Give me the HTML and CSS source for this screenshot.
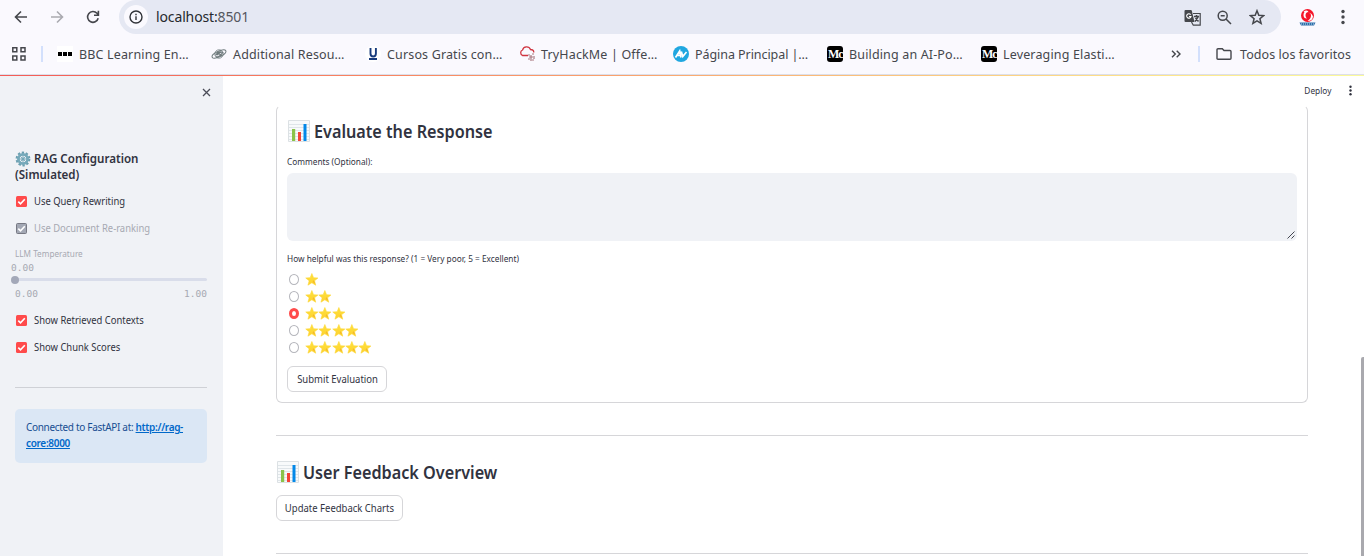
FILE: index.html
```
<!DOCTYPE html>
<html lang="es">
<head>
<meta charset="utf-8">
<title>localhost:8501</title>
<link rel="stylesheet" href="styles.css">
</head>
<body>
<svg class="defs" width="0" height="0" aria-hidden="true">
  <defs>
    <linearGradient id="gold" x1="0" y1="0" x2="0" y2="1"><stop offset="0" stop-color="#ffe23d"/><stop offset="1" stop-color="#fdd02f"/></linearGradient>
    <symbol id="star" viewBox="0 0 13 13"><path d="M6.700.5 8.400 4.700l4.400.3-3.400 2.800 1.200 4.400-3.900-2.400-3.900 2.400L4 7.800.6 5l4.400-.3z" fill="url(#gold)" stroke="#fdd835" stroke-width=".6" stroke-linejoin="round"/><path d="m8.500 7 1.500 3.800L7.500 9z" fill="#f4b82a"/></symbol>
    <symbol id="chart" viewBox="0 0 22 22"><path d="M.5.5h21v21H.5z" fill="#f8fafb" stroke="#dce1e4"/><path d="M1 4.500h20M1 7.500h20M1 10.500h20M1 13.500h20M1 16.500h20M1 19.500h20" stroke="#d8dfe4" stroke-width=".8"/><path d="M4 9h3.200v12H4z" fill="#8bc34a"/><path d="M10 12h3v9h-3z" fill="#f44336"/><path d="M15.500 4h3v17h-3z" fill="#0288e8"/></symbol>
    <symbol id="check" viewBox="0 0 11 11"><path d="m2.300 5.600 2.200 2.200 4.300-4.600" fill="none" stroke="#fff" stroke-width="1.600"/></symbol>
  </defs>
</svg>

<header class="browser">
  <div class="toolbar">
    <svg class="nav back" viewBox="0 0 14 14"><path d="M13 7H2M7 1.500 1.500 7 7 12.500" /></svg>
    <svg class="nav forward" viewBox="0 0 14 14"><path d="M1 7h11M7 1.500 12.500 7 7 12.500"/></svg>
    <svg class="nav reload" viewBox="0 0 14 14"><path d="M12.200 8.300A5.400 5.400 0 1 1 11 3.300l1.200 1.300M12.400.8v4.400H8"/></svg>
    <div class="omnibox">
      <span class="info"><svg viewBox="0 0 14 14" width="14" height="14"><circle cx="7" cy="7" r="6"/><path d="M7 6.300v3.800M7 3.700v1.500"/></svg></span>
      <span class="url">localhost:<span class="port">8501</span></span>
      <svg class="tool translate" viewBox="0 0 17 17"><path d="M9 4.500h7.200v11.700H9.300L7.500 13" fill="none" stroke="#45474c" stroke-width="1.200"/><path d="M1.500 1H7q.6 0 .8.700L10.500 13h-9Q.5 13 .5 12V2q0-1 1-1Z" fill="#45474c"/><path d="M6.600 5.600A2.200 2.200 0 1 0 7 7.500H5" fill="none" stroke="#fff" stroke-width="1.100"/><path d="M10 7.500h5M12.500 6v1.500M14 8l-3 4.500M11.500 9l3 3.500" fill="none" stroke="#45474c"/></svg>
      <svg class="tool zoomout" viewBox="0 0 15 15"><circle cx="5.700" cy="5.700" r="4.500"/><path d="m9 9 5 5M3.700 5.700h4"/></svg>
      <svg class="tool bookmark" viewBox="0 0 16 16"><path d="m8 1.700 1.800 4.500 4.800.4-3.700 3.100 1.200 4.700L8 11.900l-4.100 2.500 1.200-4.700-3.700-3.100 4.800-.4z"/></svg>
    </div>
    <svg class="profile" viewBox="0 0 17 17"><circle cx="8.500" cy="6.500" r="6.500" fill="#f5162a"/><path d="M4.500 2.500Q8 .5 9.500 3q-3 0-3 3.500 0 2 1.500 3-3.500 0-3.500-3.500Q4.500 4 5.500 3ZM9 3.500q3 .5 3 3 0 3-3.500 5.500 5 0 5.500-4.500Q13 4 9 3.500Z" fill="#fff"/><path d="M.5 13.500h16l-1.500 3H2z" fill="#2c6eaa"/><path d="M2 15h13" stroke="#c5deee" stroke-dasharray="1 1"/></svg>
    <svg class="dots" viewBox="0 0 4 16"><circle cx="2" cy="2.500" r="1.700"/><circle cx="2" cy="8" r="1.700"/><circle cx="2" cy="13.500" r="1.700"/></svg>
  </div>
  <nav class="bookmarks">
    <svg class="apps" viewBox="0 0 14 14"><path d="M.8.8h4v4h-4zM9 .8h4v4H9zM.8 9h4v4h-4zM9 9h4v4H9z"/></svg>
    <i class="sep"></i>
    <a class="bm"><svg viewBox="0 0 16 16"><path d="M0 0h16v16H0z" fill="#fff"/><path d="M1 6h4v4H1zM6 6h4v4H6zM11 6h4v4h-4z"/></svg><span>BBC Learning En…</span></a>
    <a class="bm"><svg viewBox="0 0 16 16" fill="none" stroke="#6f7b7d"><ellipse cx="8" cy="8" rx="7.500" ry="2.800" transform="rotate(-25 8 8)"/><circle cx="8" cy="8" r="4.200" stroke-width=".8"/><path d="M4.500 9.500q3-5 7-3M5 11q4 0 7-5M6 6l5 4M6 9l4-3" stroke-width="1.300"/></svg><span>Additional Resou…</span></a>
    <a class="bm"><svg viewBox="0 0 16 16"><circle cx="8" cy="8" r="8" fill="#fff"/><path d="M5.500 2v5.500q0 3 2.700 3t2.700-3V2M4 13h8" fill="none" stroke="#173b7c" stroke-width="1.900"/></svg><span>Cursos Gratis con…</span></a>
    <a class="bm"><svg viewBox="0 0 16 16" fill="none"><path d="M9 9.500H3.500a3 3 0 0 1 0-5.500 4.200 4.200 0 0 1 8-.5q3.300 0 3.300 3" stroke="#cf3540" stroke-width="1.300"/><path d="M9 9h2M13 8h2M10 11h4M9 13h2M13 14h2M12 9v6M15 10v3" stroke="#a97980" stroke-width="1.200"/></svg><span>TryHackMe | Offe…</span></a>
    <a class="bm"><svg viewBox="0 0 16 16"><circle cx="8" cy="8" r="8" fill="#20a7e0"/><path d="M2.500 11.500 6.700 5l1.300 6.500M4.500 9.300h3M8.300 5.500l1.500 5L13.500 6" fill="none" stroke="#fff" stroke-width="1.700"/></svg><span class="pp">Página Principal |…</span></a>
    <a class="bm"><span class="medium">Mc</span><span>Building an AI-Po…</span></a>
    <a class="bm"><span class="medium">Mc</span><span>Leveraging Elasti…</span></a>
    <svg class="more" viewBox="0 0 10 8"><path d="m1 .7 3.300 3.300L1 7.300M5.700.7 9 4 5.700 7.300"/></svg>
    <i class="sep sep2"></i>
    <a class="bm all"><svg viewBox="0 0 16 14" fill="none" stroke="#45474c" stroke-width="1.400"><path d="M2 1.700h4.300L8 3.500h6q1 0 1 1v6.800q0 1-1 1H2q-1 0-1-1V2.700q0-1 1-1Z"/></svg><span>Todos los favoritos</span></a>
  </nav>
</header>
<div class="app">
  <aside class="sidebar">
    <div class="close"><svg viewBox="0 0 9 9" width="9" height="9"><path d="m1 1 7 7M8 1 1 8"/></svg></div>
    <h2><svg class="gear" viewBox="0 0 16 16"><circle cx="8" cy="8" r="6.300" fill="none" stroke="#6a9eaf" stroke-width="2.200" stroke-dasharray="2.300 1.658"/><circle cx="8" cy="8" r="4.600" fill="none" stroke="#76a9ba" stroke-width="2.800"/><circle cx="8" cy="8" r="1.500" fill="#558798"/><path d="M8 4v8M4 8h8M5.200 5.200l5.600 5.600M10.800 5.200l-5.600 5.600" stroke="#76a9ba" stroke-width=".9"/></svg><span class="narrow">RAG Configuration</span><br><span class="narrow">(Simulated)</span></h2>
    <label class="opt"><i class="box"><svg><use href="#check"/></svg></i><span>Use Query Rewriting</span></label>
    <label class="opt off"><i class="box"><svg><use href="#check"/></svg></i><span>Use Document Re-ranking</span></label>
    <div class="slider">
      <div class="name"><span>LLM Temperature</span></div>
      <div class="value">0.00</div>
      <div class="track"><i class="thumb"></i></div>
      <div class="range"><span>0.00</span><span>1.00</span></div>
    </div>
    <label class="opt"><i class="box"><svg><use href="#check"/></svg></i><span>Show Retrieved Contexts</span></label>
    <label class="opt"><i class="box"><svg><use href="#check"/></svg></i><span>Show Chunk Scores</span></label>
    <div class="rule"></div>
    <div class="alert"><span>Connected to FastAPI at:</span> <a><span>http://rag-</span><br><span>core:8000</span></a></div>
  </aside>
  <main class="main">
    <div class="appbar"><span class="deploy">Deploy</span><svg viewBox="0 0 3 11" width="3" height="11"><circle cx="1.500" cy="1.700" r="1.200"/><circle cx="1.500" cy="5.500" r="1.200"/><circle cx="1.500" cy="9.300" r="1.200"/></svg></div>
    <section class="form">
      <h1><svg class="chart"><use href="#chart"/></svg><span>Evaluate the Response</span></h1>
      <div class="lab lab1"><span>Comments (Optional):</span></div>
      <div class="textarea"><svg viewBox="0 0 8 8" width="8" height="8"><path d="M.5 7.500l7-7M4.500 7.500l3-3"/></svg></div>
      <div class="lab lab2"><span>How helpful was this response? (1 = Very poor, 5 = Excellent)</span></div>
      <div class="radios">
        <label><i></i><svg><use href="#star"/></svg></label>
        <label><i></i><svg><use href="#star"/></svg><svg><use href="#star"/></svg></label>
        <label><i class="on"></i><svg><use href="#star"/></svg><svg><use href="#star"/></svg><svg><use href="#star"/></svg></label>
        <label><i></i><svg><use href="#star"/></svg><svg><use href="#star"/></svg><svg><use href="#star"/></svg><svg><use href="#star"/></svg></label>
        <label><i></i><svg><use href="#star"/></svg><svg><use href="#star"/></svg><svg><use href="#star"/></svg><svg><use href="#star"/></svg><svg><use href="#star"/></svg></label>
      </div>
      <button class="submit"><span>Submit Evaluation</span></button>
    </section>
    <div class="divider"></div>
    <h1 class="overview"><svg class="chart"><use href="#chart"/></svg><span>User Feedback Overview</span></h1>
    <button class="update"><span>Update Feedback Charts</span></button>
    <div class="divider last"></div>
    <i class="scrollbar"></i>
  </main>
</div>
</body>
</html>
```
FILE: styles.css
```
* { box-sizing: border-box; }
body { margin: 0; height: 556px; overflow: hidden; background: #fff; color: #31333f; font: 10px/16px "Noto Sans", sans-serif; }
svg { display: block; flex: none; }
.defs { position: absolute; }
span { white-space: nowrap; }
.browser { height: 76px; background: #faf9fe; border-bottom: 1px solid; border-image: linear-gradient(90deg, #f45b57, #f98561 28%, #fbbb78 60%, #fee58b 85%, #fbfa9c) 1; }
.toolbar { height: 34px; display: flex; align-items: center; }
.nav { width: 14px; height: 14px; fill: none; stroke: #45474c; stroke-width: 1.600; }
.back { margin-left: 14px; }
.forward { margin-left: 22px; stroke: #aaaab0; }
.reload { margin-left: 22px; }
.omnibox { margin-left: 19px; width: 1162px; height: 34px; border-radius: 17px; background: #e5e8f3; display: flex; align-items: center; padding-left: 5px; }
.info { width: 24px; height: 24px; border-radius: 50%; background: #faf9fe; display: grid; place-items: center; }
.info svg { fill: none; stroke: #303238; stroke-width: 1.400; }
.url { margin-left: 8px; width: 1029px; font-size: 14px; line-height: 20px; letter-spacing: -.13px; color: #26282d; }
.port { color: #55575e; }
.tool { fill: none; stroke: #45474c; stroke-width: 1.500; }
.translate { width: 17px; height: 17px; stroke: none; margin-left: -1px; }
.zoomout { width: 15px; height: 15px; margin-left: 16px; }
.bookmark { width: 16px; height: 16px; margin-left: 17px; }
.profile { width: 17px; height: 17px; margin-left: 18px; }
.dots { width: 4px; height: 16px; margin-left: 25px; fill: #45474c; }
.bookmarks { height: 41px; border-bottom: 1px solid #dddfe9; display: flex; align-items: center; color: #45474c; font-size: 12.500px; letter-spacing: .15px; }
.apps { width: 14px; height: 14px; margin-left: 12px; fill: none; stroke: #45474c; stroke-width: 1.500; }
.sep { width: 2px; height: 16px; background: #d3e0fc; margin-left: 15px; }
.sep + .bm { margin-left: 14px; }
.bm { display: flex; align-items: center; gap: 6px; flex: none; width: 154px; }
.bm svg { width: 16px; height: 16px; }
.bm span { line-height: 18px; padding-top: 1px; }
.bm .pp { letter-spacing: -.06px; }
.bm .medium { width: 16px; height: 16px; border-radius: 3px; background: #000; color: #fff; font: bold 12px/16px "Liberation Serif", serif; letter-spacing: -1.200px; padding: 0 0 0 1px; }
.more { width: 10px; height: 8px; fill: none; stroke: #45474c; stroke-width: 1.400; margin-left: 36px; }
.sep2 { margin-left: 17px; }
.sep + .all { margin-left: 16px; gap: 8px; width: auto; letter-spacing: .06px; }
.app { height: 480px; display: flex; }
.sidebar { width: 223px; background: #f0f2f6; padding: 0 16px 0 15px; display: flex; flex-direction: column; }
.close { height: 74px; padding: 12px 0 0 187px; }
.close svg { fill: none; stroke: #4b4d58; stroke-width: 1.300; }
h1, h2 { margin: 0; font-weight: 600; }
h2 { font-size: 12.500px; height: 41px; padding-top: 1px; }
.narrow { display: inline-block; transform: scaleX(.925); transform-origin: left; }
.gear { display: inline-block; width: 16px; height: 16px; vertical-align: top; margin-right: 3px; }
.opt { display: flex; align-items: center; gap: 7px; height: 20px; margin-bottom: 7px; }
.opt span { transform: scaleX(.943); transform-origin: left; }
.box { width: 11px; height: 11px; background: #ff4b4b; border-radius: 1.500px; margin-left: 1px; }
.box svg { width: 11px; height: 11px; }
.off { color: #a7a9b2; }
.off .box { background: #a3a8b4; border: 1px solid #777983; }
.off .box svg { margin: -1px; }
.slider { color: #a7a9b2; height: 65px; padding-top: 2px; }
.name { height: 14px; line-height: 13px; font-size: 9px; }
.name span { display: inline-block; transform: scaleX(.91); transform-origin: left; }
.value, .range { font: 9.500px/13px "DejaVu Sans Mono", monospace; }
.value { margin-left: -4px; }
.track { height: 3px; margin-top: 4px; background: #d9ddea; border-radius: 2px; }
.thumb { display: block; width: 8px; height: 8px; border-radius: 50%; background: #a3a8b8; margin-left: -4px; position: relative; top: -2px; }
.range { display: flex; justify-content: space-between; margin-top: 6px; }
.rule { height: 1px; background: #cfd1d6; margin-top: 23px; }
.alert { height: 54px; margin-top: 21px; padding: 10px 11px; border-radius: 5px; background: #dbe7f5; color: #174e92; letter-spacing: -.32px; }
.alert a { color: #0068c9; font-weight: 600; text-decoration: underline; }
.main { width: 1141px; padding: 0 56px 0 53px; position: relative; }
.appbar { height: 29px; margin-right: -56px; display: flex; align-items: center; justify-content: flex-end; gap: 18px; padding: 0 12px 0 0; font-size: 9px; }
.appbar svg { fill: #31333f; }
.deploy { transform: scaleX(.92); transform-origin: right; }
.form { height: 298px; border: 1px solid #d6d6d9; border-top-color: #fff; border-radius: 6px; padding: 14px 10px 10px; }
h1 { height: 22px; display: flex; align-items: center; gap: 4px; font-size: 18px; line-height: 22px; padding-left: 1px; }
h1 span { transform: scaleX(.9); transform-origin: left; }
.chart { width: 22px; height: 22px; }
.lab { font-size: 9px; line-height: 14px; }
.lab span { display: inline-block; transform: scaleX(.92); transform-origin: left; }
.lab1 { margin-top: 13px; height: 18px; }
.textarea { height: 68px; background: #f0f2f6; border-radius: 6px; display: flex; align-items: flex-end; justify-content: flex-end; padding: 0 2px 2px; }
.textarea svg { fill: none; stroke: #444650; }
.lab2 { margin-top: 11px; height: 19px; }
.radios label { height: 17px; display: flex; align-items: center; }
.radios i { width: 10px; height: 11px; border: 1px solid #b5b6bc; border-radius: 50%; margin: 0 6px 0 2px; }
.radios .on { border: 3px solid #ff4b4b; border-width: 3.500px 3px; }
.radios svg { width: 13.300px; height: 13px; }
button { display: grid; place-items: center; padding: 0; background: #fff; color: #31333f; border: 1px solid #d6d6d9; border-radius: 6px; font: 10px/16px "Noto Sans", sans-serif; height: 26px; }
button span { transform: scaleX(.95); }
.submit { width: 100px; margin-top: 10px; }
.divider { height: 1px; background: #d6d6d9; margin-top: 32px; }
.overview { margin-top: 25px; }
.update { width: 127px; margin-top: 12px; }
.last { margin-top: 32px; }
.scrollbar { position: absolute; right: 0; top: 281px; width: 3px; height: 200px; background: #a9a9ae; border-radius: 2px 0 0; }
```
